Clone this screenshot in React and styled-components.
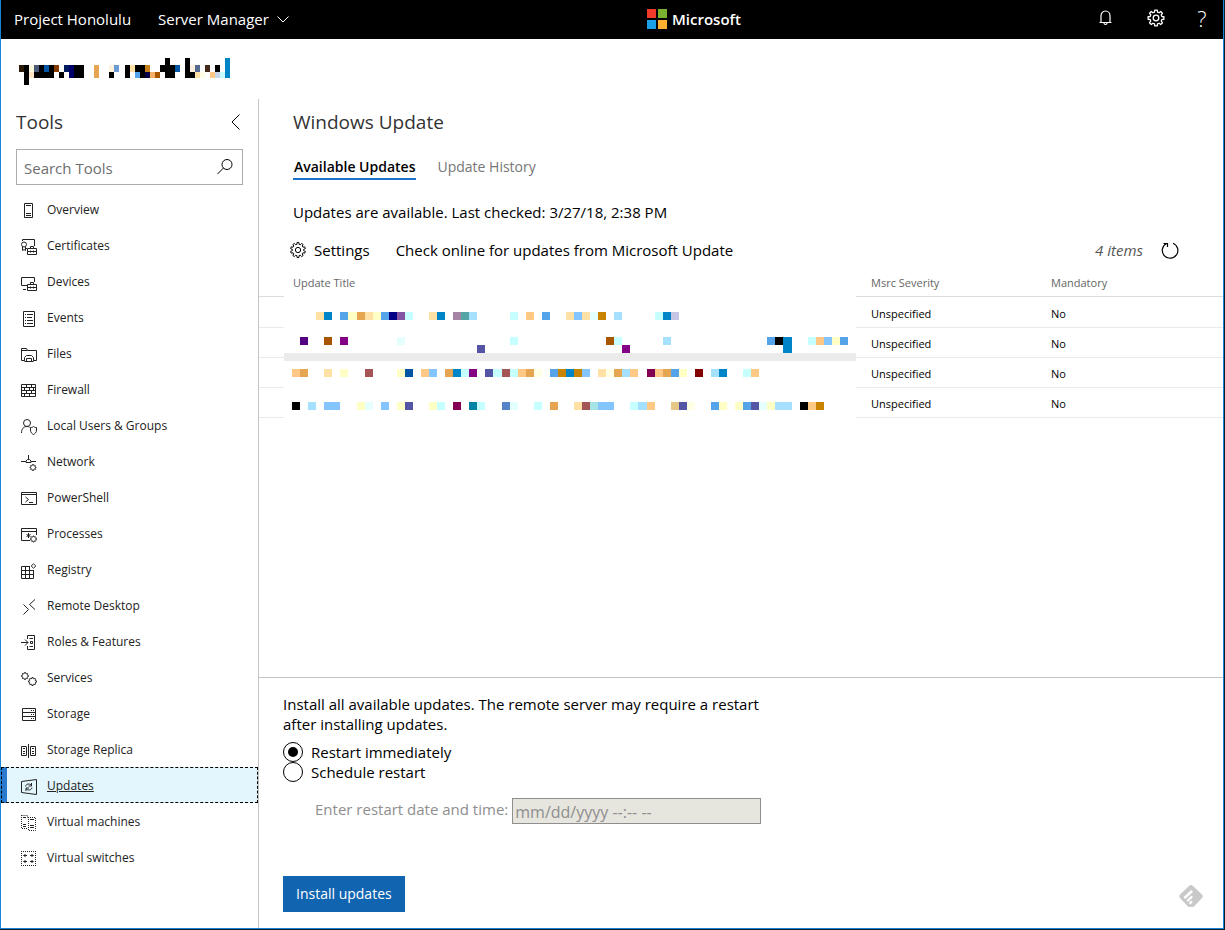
import React, { useState } from "react";
import styled, { createGlobalStyle } from "styled-components";

const GlobalStyle = createGlobalStyle`
  * { box-sizing: border-box; }
  body {
    margin: 0;
    background: #101c26;
    color: #000;
    font-family: "Open Sans", "Noto Sans", sans-serif;
    font-size: 15px;
  }
  button, input { font: inherit; color: inherit; }
  h1, h2, p, ul { margin: 0; padding: 0; }
`;

/* ---------- drawing helpers ---------- */

const gearPath = (cx, cy, outer, inner, teeth) => {
  const step = (Math.PI * 2) / teeth;
  const points = [];
  for (let i = 0; i < teeth; i += 1) {
    const a = i * step - Math.PI / 2;
    [
      [inner, -0.32],
      [outer, -0.2],
      [outer, 0.2],
      [inner, 0.32],
    ].forEach(([r, k]) => {
      points.push(
        `${(cx + r * Math.cos(a + k * step)).toFixed(2)} ${(cy + r * Math.sin(a + k * step)).toFixed(2)}`
      );
    });
  }
  return `M${points.join("L")}Z`;
};

const Gear = ({ cx, cy, r, teeth = 8, hub = 0.35 }) => (
  <>
    <path d={gearPath(cx, cy, r, r * 0.76, teeth)} strokeLinejoin="round" />
    {hub > 0 && <circle cx={cx} cy={cy} r={r * hub} />}
  </>
);

const Line = styled.svg`
  display: block;
  flex: none;
  fill: none;
  stroke: currentColor;
  stroke-width: 1;
  overflow: visible;
`;

const Toolbox = () => (
  <path d="M6.5 9.5H15.5V15.5H6.5ZM9.5 9.5V7.5H12.5V9.5M6.5 12.5H15.5M9.5 11.5V13.5M12.5 11.5V13.5" />
);

const toolIcons = {
  overview: <path d="M3.5.5H11.5V14.5H3.5ZM5 2.5H10M5 10.5H10M5 12.5H10" />,
  certificates: (
    <>
      <path d="M1.5 2V.5H13.5V7M5 9.5H6M1.5 8V11.5L3 10.5L4.500 11.5V8" />
      <circle cx="3" cy="5.500" r="2.500" />
      <Toolbox />
    </>
  ),
  devices: (
    <>
      <path d="M13.5 7V2.500H.5V10.500H6M2 14.500H5" />
      <Toolbox />
    </>
  ),
  events: (
    <path d="M2.500.5H13.500V15.500H2.500ZM4 3.500H5M6 3.500H12M4 6.500H5M6 6.500H11M4 9.500H5M6 9.500H12M4 12.500H5M6 12.500H12" />
  ),
  files: (
    <path d="M3 13.500H.5V1.500H5.500L6.500 3.500H15.500V13.500H13M.5 3.500H6.500M3.500 14V10.500L5.500 8.500H10.500L12.500 10.500V14M5.500 14V11.500H10.500V14M3.500 14.500H12.500" />
  ),
  firewall: (
    <path d="M.5 1.500H14.500V13.500H.5ZM.5 4.500H14.500M.5 7.500H14.500M.5 10.500H14.500M5.500 1.500V4.500M10.500 1.500V4.500M3.500 4.500V7.500M8.500 4.500V7.500M12.500 4.500V7.500M5.500 7.500V10.500M10.500 7.500V10.500M3.500 10.500V13.500M8.500 10.500V13.500" />
  ),
  users: (
    <>
      <circle cx="6" cy="4" r="3.500" />
      <path d="M.5 14C.5 10 2.500 7.500 6 7.500C7 7.500 8 7.800 8.500 8.300M12.500 7.500C13.500 8.500 14.500 8.500 15.500 8.500V11C15.500 13.500 14 14.700 12.500 15.500C11 14.700 9.500 13.500 9.500 11V8.500C10.500 8.500 11.500 8.500 12.500 7.500Z" />
    </>
  ),
  network: (
    <>
      <path d="M0 6.500H5M10 6.500H15M7.500 0V4M5 7.500V6L6.500 4.500H8.500L10 6V7.500Z" />
      <Gear cx={12} cy={12.500} r={3} hub={0} />
    </>
  ),
  powershell: <path d="M.5 1.500H15.500V13.500H.5ZM.5 3.500H15.500M4.500 6L7.500 8.500L4.500 11M8 11.500H12" />,
  processes: (
    <>
      <path d="M9 13.500H.5V1.500H15.500V8M.5 4.500H15.500M7.500 6V11M5.500 7.500L9.500 9.500M5.500 9.500L9.500 7.500" />
      <Gear cx={12.500} cy={12} r={3} hub={0} />
    </>
  ),
  registry: (
    <path d="M9 3.500H.5V15.500H12.500V7M.5 7.500H12.500M.5 11.500H12.500M4.500 3.500V15.500M8.500 3.500V15.500M12.500.8L14.800 3L12.500 5.200L10.200 3Z" />
  ),
  remote: <path d="M2.500 5.500L7.500 10.500L2.500 15.500M14 .5L8.500 5.500L14 10.500" />,
  roles: (
    <path d="M6.500 4V.5H13.500V14.500H6.500V11M0 7.500H7M4 4.500L7 7.500L4 10.500M8.500 3.500H12M9.500 6.500H11.500V8.500H9.500ZM8.500 11.500H12" />
  ),
  services: (
    <>
      <Gear cx={4} cy={5} r={3.500} hub={0} />
      <Gear cx={11.500} cy={10.500} r={4} hub={0} />
    </>
  ),
  storage: (
    <path d="M1.500 1.500H14.500V13.500H1.500ZM1.500 5.500H14.500M1.500 9.500H14.500M10 3.500H11M12 3.500H13M10 7.500H11M12 7.500H13M10 11.500H11M12 11.500H13" />
  ),
  replica: (
    <path d="M5 3.500H.5V12.500H5.500V3.500M9.500 3.500H14.500V12.500H9.500ZM7.500 1V15M2 5.500H4M2 8.500H4M2 10.500H4M11 5.500H13M11 8.500H13M11 10.500H13" />
  ),
  updates: (
    <path d="M.5 2.500L15.500.5V15.500L.5 13.500ZM4.500 7.500C5 4.800 8.500 4 10.500 6.500M10.500 4V7H7.500M11 8.500C10.500 11.200 7 12 5 9.500M5 12V9H8" />
  ),
  machines: (
    <>
      <path strokeDasharray="1 1" d="M.5 0V13.500H6M.5.5H6.500V3M7.500 2V15.500H14.500V2.500H7.500" />
      <path d="M2 2.500H5M2 9.500H5M2 11.500H5M9 4.500H13M9 10.500H13M9 12.500H13" />
    </>
  ),
  switches: (
    <>
      <path strokeDasharray="1 1" d="M.5 0V15M2 .5H15M14.500 2V15M2 14.500H15" />
      <path d="M2.500 4.500H6M9 4.500H12.500M4.500 3L3 4.500L4.500 6M10.500 3L12 4.500L10.500 6M2.500 10.500H6M9 10.500H12.500M4.500 9L3 10.500L4.500 12M10.500 9L12 10.500L10.500 12" />
    </>
  ),
};

const tools = [
  ["overview", "Overview"],
  ["certificates", "Certificates"],
  ["devices", "Devices"],
  ["events", "Events"],
  ["files", "Files"],
  ["firewall", "Firewall"],
  ["users", "Local Users & Groups"],
  ["network", "Network"],
  ["powershell", "PowerShell"],
  ["processes", "Processes"],
  ["registry", "Registry"],
  ["remote", "Remote Desktop"],
  ["roles", "Roles & Features"],
  ["services", "Services"],
  ["storage", "Storage"],
  ["replica", "Storage Replica"],
  ["updates", "Updates"],
  ["machines", "Virtual machines"],
  ["switches", "Virtual switches"],
];

/* ---------- pixelated (redacted) text ---------- */

/* Each strip is [y, height, cell width, "x:colour[:width] ..."] */
const parseStrip = ([y, height, cell, cells]) =>
  cells.split(" ").map((entry) => {
    const [x, fill, width] = entry.split(":");
    return { x: Number(x), y, width: Number(width || cell), height, fill: `#${fill}` };
  });

const Pixels = ({ strips }) =>
  strips.flatMap(parseStrip).map((r) => <rect key={`${r.x}-${r.y}`} {...r} />);

const serverStrips = [
  [58, 7, 5, "165:000 185:000 225:0084c8"],
  [
    65, 7, 5,
    "19:2b1a06 24:000 29:fff9e0 34:4a5a78 39:000 44:0055a5 49:000 54:843a00 64:001a60 69:00006b 74:000:10 94:e6a550 109:fff3e0 114:6b9bd0 125:000 130:ffe0a5 135:000:10 145:c8801a 160:000:15 175:0055a5 185:000 190:fff0e0 195:556a90 205:432a1a 215:000 225:0084c8",
  ],
  [
    72, 6, 5,
    "24:000 29:ffe4c5 34:000:10 44:000 49:000 59:000 69:00006b 74:000:10 94:e6a550 109:000 125:000 135:55a3e8 140:000 145:0a0045 150:f5b06a 155:a85500 165:000:10 185:000:10 195:ffe0a5 200:fffde5 210:ffc884 215:c8d5e8 220:c5ffff 225:0084c8",
  ],
  [78, 7, 5, "24:000"],
];

const updateStrips = [
  [
    312, 8, 8,
    "316:ffe0a5 324:0084c8 340:55a3e8 348:ffffc5:9 357:e6a550 365:ffe0a5 373:ffffc5 381:55a3e8 389:000084 397:8555a5 405:c5ffff 429:ffe0a5 437:0084c8 453:a584a5 461:55a5a5 469:a5e0ff 510:c5ffff 526:ffc884 542:55a3e8 566:ffe0a5 574:84c5ff 582:ffe0a5 590:e5ffff 598:c88400 614:a5e0ff 655:c5ffff 663:0084c8 671:c5c5e5",
  ],
  [
    337, 8, 8,
    "300:550084 324:a85500 340:840084 397:e5ffff 510:c5ffff 606:a85500 614:c5ffff 663:a5e0ff 767:55a3e8 775:000 783:0084c8:9 808:c5ffff 816:ffc884 824:84c5ff 832:ffffc5 840:55a3e8",
  ],
  [345, 8, 8, "477:5555a5 622:840084 783:0084c8:9"],
  [
    369, 8, 8,
    "292:ffc884 300:e6a550 324:ffe0a5 340:ffffc5 365:a55555 397:ffffc5 405:0055a5 421:ffc884 429:84c5ff 445:e6a550 453:0084c8 461:c5ffff 469:840084 485:5555a5 493:c5ffff:9 502:a55555 510:c5ffff 518:ffc884 526:e6a550 534:ffffe5 550:55a3e8 558:c88400 566:0084c8 574:c88400 582:84c5ff 598:ffe0a5 606:ffffe5 614:e6a550 622:a5e0ff 630:ffc884 647:840055 655:ffc884 663:e6a550 671:55a3e8 679:ffffc5 695:840000 711:a5e0ff 719:0084c8 743:c5ffff 751:ffc884",
  ],
  [
    402, 8, 8,
    "292:000 308:a5e0ff 324:84c5ff:16 357:ffffc5 365:e5ffff 381:84c5ff 397:ffffc5 405:5555a5 429:ffffc5 437:c5ffff 453:840055 469:0084a5 477:c5ffff 502:5584c8 510:e5ffff 534:c5ffff 550:e6a550 574:ffe0a5 582:a55555 590:a5e5e5 598:84c5ff:16 630:c5ffff 638:a5e0ff:9 647:ffc884 671:e5c884 679:5555a5 687:ffffe5 711:55a3e8 719:ffffc5 735:ffffc5 743:55a3e8 751:5555a5 759:e5ffff 767:ffffc5 775:a5e0ff:17 800:000 808:ffc884 816:c88400",
  ],
];

/* ---------- window frame and top bar ---------- */

const Frame = styled.div`
  position: relative;
  display: flex;
  flex-direction: column;
  min-height: calc(100vh - 1px);
  margin: 0 1px 1px 0;
  background: #fff;
  border: solid #1883d7;
  border-width: 0 1px 1px;
`;

const TopBar = styled.header`
  display: flex;
  align-items: center;
  height: 39px;
  padding-bottom: 2px;
  background: #000;
  color: #fff;
`;

const TopNav = styled.nav`
  display: flex;
  flex: 0 0 calc(50% + 35px);
  gap: 27px;
  padding-left: 13px;
`;

const TopLink = styled.a`
  color: inherit;
  text-decoration: none;
  line-height: 20px;
`;

const TopMenu = styled.button`
  display: flex;
  align-items: center;
  gap: 8px;
  padding: 0;
  border: 0;
  background: none;
  line-height: 20px;

  svg { margin-top: 2px; }
`;

const Brand = styled.div`
  display: flex;
  align-items: center;
  gap: 5px;
  font-weight: 600;
  line-height: 20px;
`;

const TopActions = styled.div`
  display: flex;
  margin-left: auto;
`;

const TopAction = styled.button`
  display: flex;
  align-items: center;
  justify-content: center;
  width: ${({ $narrow }) => ($narrow ? 42 : 50)}px;
  height: 36px;
  padding: 0 0 1px;
  border: 0;
  background: none;
  font-size: 22px;
  font-weight: 300;
  line-height: 20px;
`;

const ServerName = styled.div`
  height: 60px;
  padding: 19px 17px 0;
`;

const Body = styled.div`
  display: flex;
  flex: 1;
`;

/* ---------- tools list ---------- */

const Sidebar = styled.aside`
  flex: 0 0 258px;
  min-width: 0;
  padding-top: 9px;
  border-right: 1px solid #c4c4c4;
`;

const SidebarHead = styled.div`
  display: flex;
  align-items: center;
  justify-content: space-between;
  padding: 0 15px;
`;

const Heading = styled.h2`
  color: #333;
  font-size: 19px;
  font-weight: 500;
  line-height: 28px;
`;

const Collapse = styled.button`
  display: flex;
  padding: 0 3px;
  border: 0;
  background: none;
`;

const Search = styled.label`
  display: flex;
  align-items: center;
  height: 36px;
  margin: 13px 15px 6px;
  padding: 0 9px 0 7px;
  border: 1px solid #ababab;
`;

const SearchInput = styled.input`
  flex: 1;
  width: 100%;
  min-width: 0;
  padding: 2px 0 0;
  border: 0;
  outline: 0;
  background: none;
  &::placeholder { color: #6e6e6e; opacity: 1; }
`;

const ToolList = styled.ul`
  list-style: none;
`;

const ToolLink = styled.a`
  display: flex;
  align-items: center;
  gap: 10px;
  height: 36px;
  padding: 2px 0 0 ${({ $active }) => ($active ? 14 : 20)}px;
  border-left: ${({ $active }) => ($active ? "6px solid #2b78cf" : "0")};
  background: ${({ $active }) => ($active ? "#e3f6fd" : "none")};
  outline: ${({ $active }) => ($active ? "1px dashed #000" : "0")};
  outline-offset: -1px;
  color: #222;
  font-size: 12px;
  line-height: 18px;
  text-decoration: ${({ $active }) => ($active ? "underline" : "none")};

  svg { margin-top: 2px; }
`;

/* ---------- main column ---------- */

const Main = styled.main`
  display: flex;
  flex: 1;
  flex-direction: column;
  min-width: 0;
  padding-top: 9px;
`;

const Intro = styled.div`
  padding: 0 34px;
`;

const Tabs = styled.div`
  display: flex;
  gap: 20px;
  margin: 20px 0 22px;
`;

const Tab = styled.button`
  padding: 1px 1px;
  border: 0;
  border-bottom: 2px solid ${({ $active }) => ($active ? "#1a73c7" : "transparent")};
  background: none;
  color: ${({ $active }) => ($active ? "#000" : "#767676")};
  font-size: 14px;
  font-weight: ${({ $active }) => ($active ? 600 : 400)};
  line-height: 20px;
`;

const Status = styled.p`
  line-height: 20px;
`;

const Toolbar = styled.div`
  display: flex;
  align-items: center;
  gap: 26px;
  height: 36px;
  margin-top: 10px;
  padding: 0 44px 0 31px;
`;

const Command = styled.button`
  display: flex;
  align-items: center;
  gap: 8px;
  padding: 0;
  border: 0;
  background: none;
  line-height: 20px;
`;

const Count = styled.em`
  margin-left: auto;
  color: #555;
`;

const Refresh = styled(Command)`
  margin-left: -7px;
`;

const Updates = styled.div`
  position: relative;
`;

const UpdateTable = styled.table`
  width: 100%;
  border-collapse: separate;
  border-spacing: 0;
  table-layout: fixed;
  font-size: 11px;
  line-height: 16px;
`;

const Column = styled.col`
  width: ${({ $width }) => $width};
`;

const HeadCell = styled.th`
  height: 29px;
  padding: 2px 0 0 ${({ $first }) => ($first ? 34 : 0)}px;
  border-bottom: 1px solid #dcdcdc;
  color: #666;
  font-weight: 400;
  text-align: left;
`;

const Cell = styled.td`
  height: 30px;
  padding: 3px 0 0;
  border-bottom: 1px solid #eaeaea;

  tr:first-child > & { height: 31px; }
`;

const Redaction = styled.svg`
  position: absolute;
  top: 26px;
  left: 25px;
  display: block;
`;

/* ---------- install panel ---------- */

const Install = styled.form`
  margin-top: auto;
  padding: 16px 24px;
  border-top: 1px solid #c4c4c4;
`;

const Note = styled.p`
  max-width: 490px;
  margin-bottom: 8px;
  line-height: 20px;
`;

const Choice = styled.label`
  display: flex;
  align-items: center;
  gap: 8px;
  height: 20px;
  line-height: 20px;
`;

const Radio = styled.input`
  display: grid;
  place-items: center;
  width: 20px;
  height: 20px;
  margin: 0;
  border: 1px solid #000;
  border-radius: 50%;
  appearance: none;
  &:checked::before {
    content: "";
    width: 10px;
    height: 10px;
    border-radius: 50%;
    background: #000;
  }
`;

const Schedule = styled.div`
  display: flex;
  gap: 4px;
  margin: 16px 0 52px 32px;
  color: #8e8e8e;
  line-height: 22px;
`;

const DateInput = styled.input`
  width: 249px;
  height: 26px;
  padding: 2px 2px 0;
  border: 1px solid #8e8e8e;
  background: #e6e6df;
  font-size: 16px;
  &::placeholder { color: #8e8e8e; opacity: 1; }
`;

const Primary = styled.button`
  height: 36px;
  padding: 0 13px 1px;
  border: 0;
  background: #1064b0;
  color: #fff;
  font-size: 14px;
`;

const Feedback = styled.a`
  position: absolute;
  right: 20px;
  bottom: 21px;
`;

export default function App() {
  const [restart, setRestart] = useState("now");

  return (
    <>
      <GlobalStyle />
      <Frame>
        <TopBar>
          <TopNav>
            <TopLink href="#home">Project Honolulu</TopLink>
            <TopMenu type="button">
              Server Manager
              <Line width="12" height="7" viewBox="0 0 12 7">
                <path d="M.5.5L6 6L11.500.5" />
              </Line>
            </TopMenu>
          </TopNav>
          <Brand>
            <svg width="20" height="20" viewBox="0 0 20 20" aria-hidden="true">
              <rect width="9" height="9" fill="#f03a2a" />
              <rect x="11" width="9" height="9" fill="#7ab22f" />
              <rect y="11" width="9" height="9" fill="#1ba0e8" />
              <rect x="11" y="11" width="9" height="9" fill="#ffb030" />
            </svg>
            Microsoft
          </Brand>
          <TopActions>
            <TopAction type="button" aria-label="Notifications">
              <Line width="14" height="16" viewBox="0 0 14 16">
                <path d="M.5 12.500H12.500M2 12.500V6C2 3 4 1 6.500 1S11 3 11 6V12.500M5 13C5 15 8 15 8 13" strokeWidth="1.200" />
              </Line>
            </TopAction>
            <TopAction type="button" aria-label="Settings">
              <Line width="18" height="18" viewBox="0 0 18 18">
                <g strokeWidth="1.300">
                  <Gear cx={9} cy={9} r={8} />
                </g>
              </Line>
            </TopAction>
            <TopAction type="button" $narrow aria-label="Help">?</TopAction>
          </TopActions>
        </TopBar>

        <ServerName>
          <svg width="213" height="28" viewBox="18 58 213 28" shapeRendering="crispEdges" aria-hidden="true">
            <Pixels strips={serverStrips} />
          </svg>
        </ServerName>

        <Body>
          <Sidebar>
            <SidebarHead>
              <Heading>Tools</Heading>
              <Collapse type="button" aria-label="Collapse tools">
                <Line width="9" height="16" viewBox="0 0 9 16">
                  <path d="M8.500.5L1 8L8.500 15.500" />
                </Line>
              </Collapse>
            </SidebarHead>
            <Search>
              <SearchInput type="text" placeholder="Search Tools" aria-label="Search Tools" />
              <Line width="16" height="16" viewBox="0 0 16 16">
                <circle cx="10" cy="5.500" r="5" />
                <path d="M6.500 9L.5 15" />
              </Line>
            </Search>
            <ToolList>
              {tools.map(([id, label]) => (
                <li key={id}>
                  <ToolLink href={`#${id}`} $active={id === "updates"}>
                    <Line width="16" height="16" viewBox="0 0 16 16" aria-hidden="true">
                      {toolIcons[id]}
                    </Line>
                    {label}
                  </ToolLink>
                </li>
              ))}
            </ToolList>
          </Sidebar>

          <Main>
            <Intro>
              <Heading as="h1">Windows Update</Heading>
              <Tabs>
                <Tab type="button" $active>Available Updates</Tab>
                <Tab type="button">Update History</Tab>
              </Tabs>
              <Status>Updates are available. Last checked: 3/27/18, 2:38 PM</Status>
            </Intro>
            <Toolbar>
              <Command type="button">
                <Line width="16" height="16" viewBox="0 0 16 16">
                  <Gear cx={8} cy={8} r={7.500} teeth={10} />
                </Line>
                Settings
              </Command>
              <Command type="button">Check online for updates from Microsoft Update</Command>
              <Count>4 items</Count>
              <Refresh type="button" aria-label="Refresh">
                <Line width="17" height="17" viewBox="0 0 17 17">
                  <path d="M4.500 1.500A7.800 7.800 0 1 0 11 1.200M1.500 1.500H5.500V5" strokeWidth="1.200" />
                </Line>
              </Refresh>
            </Toolbar>
            <Updates>
              <UpdateTable>
                <colgroup>
                  <Column $width="612px" />
                  <Column $width="180px" />
                  <Column $width="auto" />
                </colgroup>
                <thead>
                  <tr>
                    <HeadCell $first>Update Title</HeadCell>
                    <HeadCell>Msrc Severity</HeadCell>
                    <HeadCell>Mandatory</HeadCell>
                  </tr>
                </thead>
                <tbody>
                  {[0, 1, 2, 3].map((row) => (
                    <tr key={row}>
                      <Cell />
                      <Cell>Unspecified</Cell>
                      <Cell>No</Cell>
                    </tr>
                  ))}
                </tbody>
              </UpdateTable>
              <Redaction width="572" height="126" viewBox="284 294 572 126" shapeRendering="crispEdges" aria-hidden="true">
                <rect x="284" y="294" width="572" height="126" fill="#fff" />
                <rect x="284" y="353" width="572" height="8" fill="#ebebeb" />
                <Pixels strips={updateStrips} />
              </Redaction>
            </Updates>

            <Install onSubmit={(e) => e.preventDefault()}>
              <Note>
                Install all available updates. The remote server may require a restart after installing
                updates.
              </Note>
              <Choice>
                <Radio type="radio" name="restart" checked={restart === "now"} onChange={() => setRestart("now")} />
                Restart immediately
              </Choice>
              <Choice>
                <Radio type="radio" name="restart" checked={restart === "later"} onChange={() => setRestart("later")} />
                Schedule restart
              </Choice>
              <Schedule>
                <label htmlFor="restart-date">Enter restart date and time:</label>
                <DateInput id="restart-date" type="text" placeholder="mm/dd/yyyy --:-- --" disabled={restart === "now"} />
              </Schedule>
              <Primary type="submit">Install updates</Primary>
            </Install>
          </Main>
        </Body>
        <Feedback href="#feedback" aria-label="Feedback">
          <svg width="24" height="22" viewBox="0 0 24 22" display="block" aria-hidden="true">
            <path d="M10 1Q12 -.8 14 1L23 9.500Q24.500 11.500 23 13L16 20.500Q15 22 13 22H11Q9 22 8 20.500L1 13Q-.5 11.500 1 9.500Z" fill="#c9c9c9" />
            <path d="M6 12.500L12.500 6.500M9 15.500L12.500 12M11.300 18L12.300 17" stroke="#fff" strokeWidth="2.400" strokeLinecap="round" fill="none" />
          </svg>
        </Feedback>
      </Frame>
    </>
  );
}
